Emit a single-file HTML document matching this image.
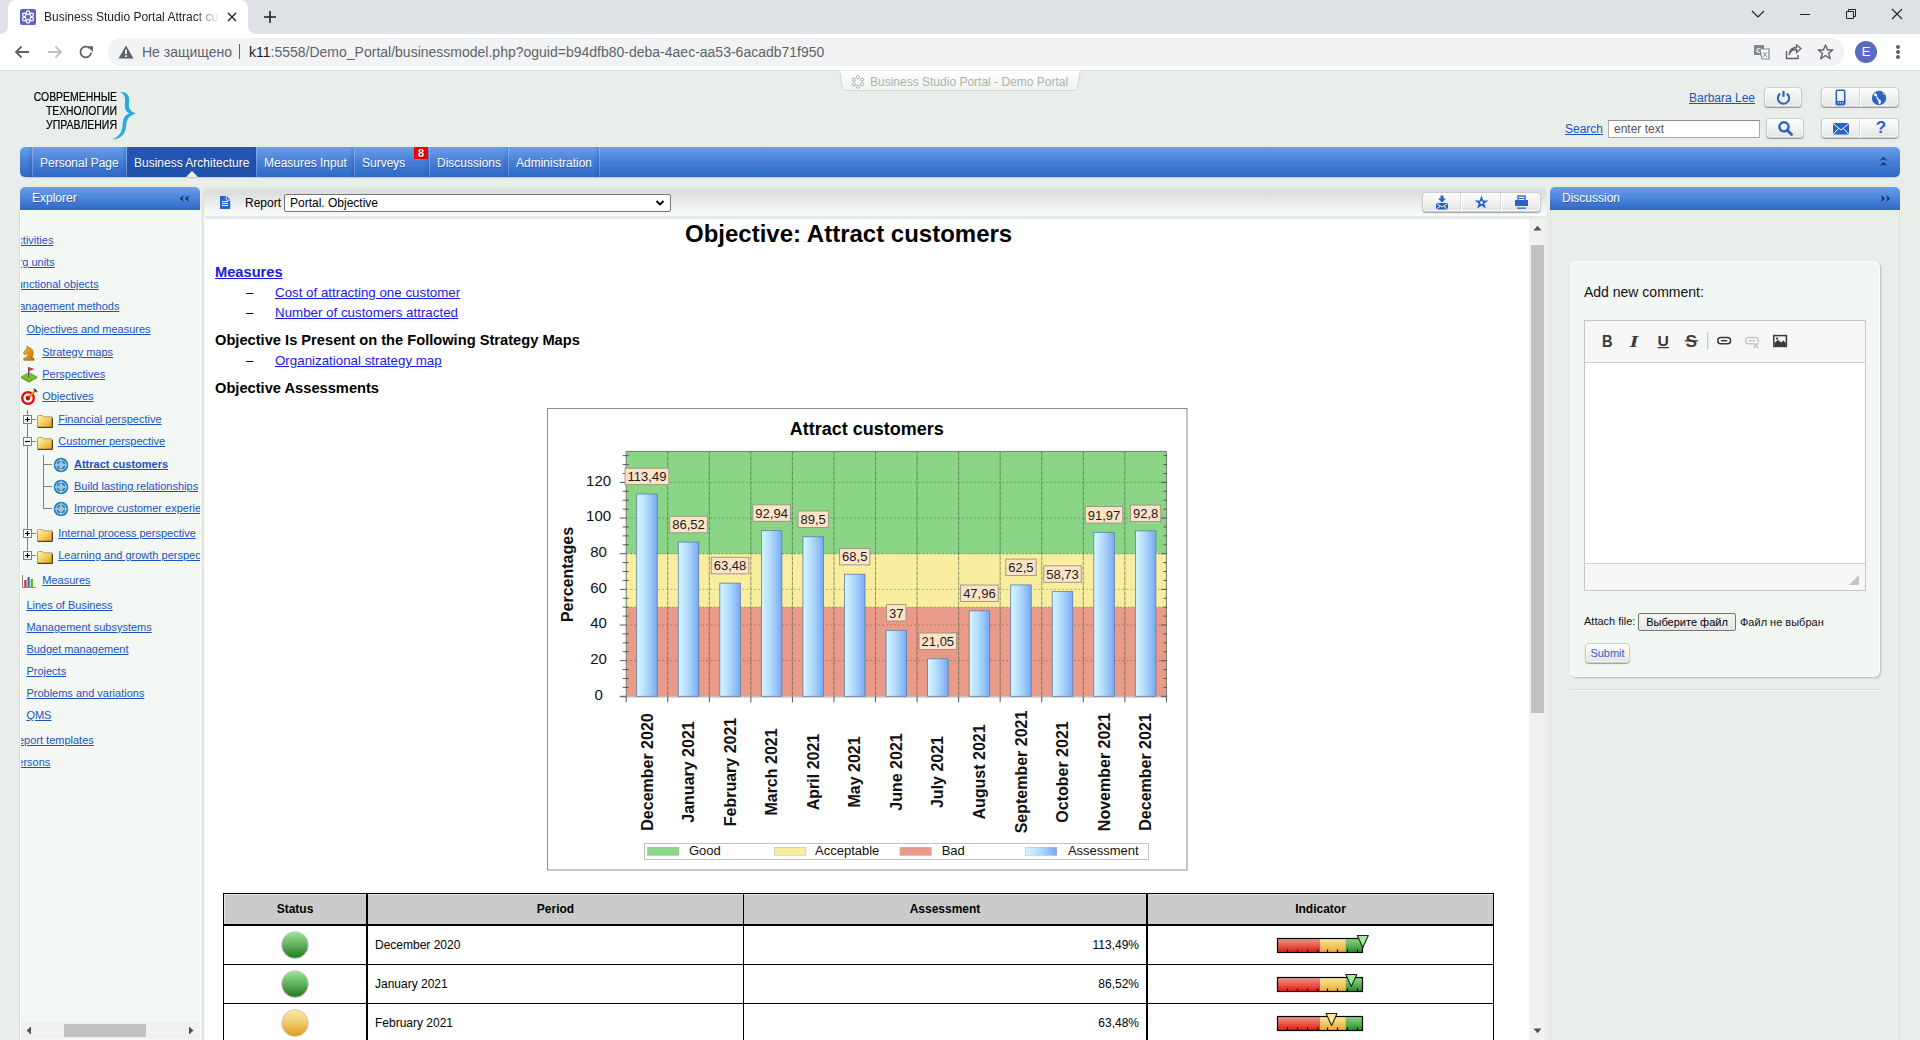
<!DOCTYPE html>
<html><head><meta charset="utf-8">
<style>
*{box-sizing:border-box;margin:0;padding:0}
html,body{width:1920px;height:1040px;overflow:hidden;background:#e9eeea;font-family:"Liberation Sans",sans-serif}
.a{position:absolute}
.nw{white-space:nowrap}
a,.lk{color:#1a53c0;text-decoration:underline}
/* chrome */
#tabs{left:0;top:0;width:1920px;height:34px;background:#dee1e6}
#tab{left:8px;top:0;width:240px;height:34px;background:#fff;border-radius:8px 8px 0 0}
#addr{left:0;top:34px;width:1920px;height:37px;background:#fff;border-bottom:1px solid #dadce0}
#omni{left:108px;top:38px;width:1736px;height:28px;background:#f1f3f4;border-radius:14px}
.ct{font-size:14px;color:#202124}
/* nav */
#nav{left:20px;top:147px;width:1880px;height:30px;border-radius:5px;background:linear-gradient(#6a9fea,#4a82d8 45%,#2d68c5);box-shadow:0 1px 1px rgba(0,0,0,.15)}
.ni{top:148px;height:30px;color:#fff;font-size:12px;line-height:30px;text-shadow:.6px .6px 0 rgba(0,20,80,.35)}
.ns{top:147px;width:6px;height:30px;margin-left:-5px;background:linear-gradient(90deg,rgba(10,40,110,0),rgba(10,40,110,.16) 83%,rgba(255,255,255,.22) 83%)}
.ph{height:23px;border-radius:5px 5px 0 0;background:linear-gradient(#6aa0ea,#2d68c5);color:#fff;font-size:12px;line-height:22px;text-shadow:.6px .6px 0 rgba(0,20,80,.35)}
.sl{font-size:11px;color:#1a53c0;text-decoration:underline;white-space:nowrap}
.cl{font-size:13.33px;color:#1a1ae6;text-decoration:underline;white-space:nowrap}
.btn{border-radius:4px;background:linear-gradient(#fdfdfd,#e3e5e4);box-shadow:0 1px 1px rgba(0,0,0,.35),inset 0 0 0 1px rgba(255,255,255,.6);border:1px solid #c9cdcb}
</style></head><body>
<div class="a" style="left:0;top:0;width:1920px;height:1040px">

<!-- ============ BROWSER CHROME ============ -->
<div id="tabs" class="a"></div>
<div id="tab" class="a"></div>
<svg class="a" style="left:0;top:26px" width="8" height="8"><path d="M0 8 A8 8 0 0 0 8 0 V8Z" fill="#fff"/></svg>
<svg class="a" style="left:248px;top:26px" width="8" height="8"><path d="M8 8 A8 8 0 0 1 0 0 V8Z" fill="#fff"/></svg>
<svg class="a" style="left:20px;top:9px" width="16" height="16" viewBox="0 0 16 16"><rect width="16" height="16" rx="2" fill="#6262c6"/><g fill="#6262c6" stroke="#fff" stroke-width="1.2"><circle cx="8.00" cy="3.70" r="1.75"/><circle cx="11.72" cy="5.85" r="1.75"/><circle cx="11.72" cy="10.15" r="1.75"/><circle cx="8.00" cy="12.30" r="1.75"/><circle cx="4.28" cy="10.15" r="1.75"/><circle cx="4.28" cy="5.85" r="1.75"/></g></svg>
<div class="a nw" style="left:44px;top:9px;width:176px;overflow:hidden;font-size:12px;line-height:16px;color:#202124;-webkit-mask-image:linear-gradient(90deg,#000 150px,transparent 176px)">Business Studio Portal Attract customers</div>
<svg class="a" style="left:226px;top:11px" width="12" height="12" viewBox="0 0 12 12"><path d="M2 2L10 10M10 2L2 10" stroke="#202124" stroke-width="1.4"/></svg>
<svg class="a" style="left:262px;top:9px" width="16" height="16" viewBox="0 0 16 16"><path d="M8 2V14M2 8H14" stroke="#202124" stroke-width="1.6"/></svg>
<svg class="a" style="left:1750px;top:8px" width="16" height="12" viewBox="0 0 16 12"><path d="M2 3L8 9L14 3" fill="none" stroke="#202124" stroke-width="1.2"/></svg>
<div class="a" style="left:1800px;top:14px;width:10px;height:1px;background:#202124"></div>
<svg class="a" style="left:1845px;top:8px" width="12" height="12" viewBox="0 0 12 12"><path d="M1.5 3.5h7v7h-7z M3.5 3.5V1.5h7v7h-2" fill="none" stroke="#202124" stroke-width="1"/></svg>
<svg class="a" style="left:1891px;top:8px" width="12" height="12" viewBox="0 0 12 12"><path d="M1 1L11 11M11 1L1 11" stroke="#202124" stroke-width="1.1"/></svg>
<div id="addr" class="a"></div>
<svg class="a" style="left:13px;top:44px" width="18" height="16" viewBox="0 0 18 16"><path d="M16 8H3M8.5 2.5L3 8L8.5 13.5" fill="none" stroke="#5f6368" stroke-width="1.8"/></svg>
<svg class="a" style="left:46px;top:44px" width="18" height="16" viewBox="0 0 18 16"><path d="M2 8H15M9.5 2.5L15 8L9.5 13.5" fill="none" stroke="#bdc1c6" stroke-width="1.8"/></svg>
<svg class="a" style="left:78px;top:44px" width="16" height="16" viewBox="0 0 16 16"><path d="M13.2 8.6A5.4 5.4 0 1 1 11.8 4.3" fill="none" stroke="#5f6368" stroke-width="1.8"/><path d="M9.2 2.2H15V8Z" fill="#5f6368"/></svg>
<div id="omni" class="a"></div>
<svg class="a" style="left:118px;top:45px" width="16" height="14" viewBox="0 0 16 14"><path d="M8 0.5L15.5 13.5H0.5Z" fill="#5f6368"/><rect x="7.1" y="4.5" width="1.8" height="4.6" fill="#f1f3f4"/><rect x="7.1" y="10.2" width="1.8" height="1.8" fill="#f1f3f4"/></svg>
<div class="a ct nw" style="left:142px;top:44px;line-height:16px;color:#5f6368">Не защищено</div>
<div class="a" style="left:239px;top:44px;width:1px;height:15px;background:#5f6368"></div>
<div class="a ct nw" style="left:249px;top:44px;line-height:16px;color:#5f6368"><span style="color:#202124">k11</span>:5558/Demo_Portal/businessmodel.php?oguid=b94dfb80-deba-4aec-aa53-6acadb71f950</div>
<svg class="a" style="left:1753px;top:44px" width="18" height="16" viewBox="0 0 18 16"><rect x="1" y="1" width="10" height="10" rx="1" fill="#80868b"/><text x="3" y="9" font-size="8" fill="#fff" font-family="Liberation Sans" font-weight="700">G</text><path d="M7 5h9v10H9z" fill="#fff" stroke="#80868b" stroke-width="1.2"/><path d="M10 8l4 5M14 8l-4 5" stroke="#80868b" stroke-width="1"/></svg>
<svg class="a" style="left:1785px;top:44px" width="17" height="16" viewBox="0 0 17 16"><path d="M1.5 7V14.5H13V11" fill="none" stroke="#5f6368" stroke-width="1.4"/><path d="M4 11C5 7 8 5.5 11.5 5.5V8.5L16 4.5L11.5 0.8V3.5C7 3.5 4.5 6.5 4 11Z" fill="none" stroke="#5f6368" stroke-width="1.3"/></svg>
<svg class="a" style="left:1817px;top:44px" width="17" height="16" viewBox="0 0 17 16"><path d="M8.5 1L10.6 6H15.8L11.6 9.2L13.2 14.8L8.5 11.5L3.8 14.8L5.4 9.2L1.2 6H6.4Z" fill="none" stroke="#5f6368" stroke-width="1.4" stroke-linejoin="round"/></svg>
<div class="a" style="left:1855px;top:41px;width:22px;height:22px;border-radius:11px;background:#5c6bc0;color:#fff;font-size:13px;line-height:22px;text-align:center">E</div>
<div class="a" style="left:1896px;top:45px;width:4px;height:4px;border-radius:2px;background:#5f6368"></div>
<div class="a" style="left:1896px;top:50px;width:4px;height:4px;border-radius:2px;background:#5f6368"></div>
<div class="a" style="left:1896px;top:55px;width:4px;height:4px;border-radius:2px;background:#5f6368"></div>

<!-- ============ HEADER ============ -->
<div class="a nw" style="left:7px;top:90px;width:110px;font-size:12px;line-height:14px;color:#000;text-align:right;-webkit-text-stroke:.2px #000">
<div style="transform:scaleX(.87);transform-origin:right">СОВРЕМЕННЫЕ</div>
<div style="transform:scaleX(.865);transform-origin:right">ТЕХНОЛОГИИ</div>
<div style="transform:scaleX(.875);transform-origin:right">УПРАВЛЕНИЯ</div>
</div>
<svg class="a" style="left:0;top:0" width="140" height="142"><path d="M119.5 92C125 91.3 130 93.8 129.2 102C128.7 107 128.3 110.5 135.8 113.5C128.5 116 126.6 119 126.2 126C125.6 133 121 139.8 112.5 139.2C118.5 137 122 133 122.6 125C123.1 118 124.3 115 129.5 113.5C124.4 111.2 124.6 107 125.1 102C125.6 96 123.8 93.5 119.5 92Z" fill="#2aa8e2"/></svg>
<svg class="a" style="left:838px;top:70px" width="244" height="22" viewBox="0 0 244 22"><defs><linearGradient id="tg" x1="0" y1="0" x2="0" y2="1"><stop offset="0" stop-color="#ffffff"/><stop offset="1" stop-color="#f0f3f1"/></linearGradient></defs><path d="M1.5 0.5L4.5 18Q5 20.5 8 20.5H236Q239 20.5 239.5 18L242.5 0.5" fill="url(#tg)" stroke="#d3d9d5" stroke-width="1"/></svg>
<svg class="a" style="left:851px;top:75px" width="14" height="14" viewBox="0 0 14 14"><g fill="none" stroke="#a8b5ac" stroke-width="1"><circle cx="7" cy="2.3" r="1.6"/><circle cx="11.1" cy="4.7" r="1.6"/><circle cx="11.1" cy="9.3" r="1.6"/><circle cx="7" cy="11.7" r="1.6"/><circle cx="2.9" cy="9.3" r="1.6"/><circle cx="2.9" cy="4.7" r="1.6"/></g></svg>
<div class="a nw" style="left:870px;top:75px;font-size:12px;line-height:14px;color:#a7b4ab">Business Studio Portal - Demo Portal</div>

<div class="a nw lk" style="left:1689px;top:91px;font-size:12px;line-height:14px">Barbara Lee</div>
<div class="a btn" style="left:1764px;top:87px;width:38px;height:20px"></div>
<svg class="a" style="left:1776px;top:90px" width="15" height="15" viewBox="0 0 15 15"><path d="M4.2 3.6A5.6 5.6 0 1 0 10.8 3.6" fill="none" stroke="#2c62c6" stroke-width="2"/><rect x="6.4" y="0.8" width="2.2" height="6.2" rx="1" fill="#2c62c6"/></svg>
<div class="a btn" style="left:1821px;top:87px;width:78px;height:20px"></div>
<div class="a" style="left:1860px;top:88px;width:1px;height:19px;background:#fff;box-shadow:-1px 0 0 #d8dcda"></div>
<svg class="a" style="left:1835px;top:89px" width="11" height="17" viewBox="0 0 11 17"><rect x="1.3" y="1.3" width="8.4" height="14.4" rx="1.3" fill="none" stroke="#2c62c6" stroke-width="1.6"/><rect x="1.3" y="12" width="8.4" height="3.7" fill="#2c62c6"/><circle cx="3.4" cy="13.9" r=".6" fill="#fff"/><circle cx="5.5" cy="13.9" r=".6" fill="#fff"/><circle cx="7.6" cy="13.9" r=".6" fill="#fff"/></svg>
<svg class="a" style="left:1871px;top:90px" width="16" height="16" viewBox="0 0 16 16"><circle cx="8" cy="8" r="7.2" fill="#2c62c6"/><path d="M3.2 3.5C4.5 3 5.8 3.8 6 5C6.2 6.5 5 6.8 5.5 8.2C6 9.5 7.5 9.8 7.5 11.5C7.5 13 8 14 8.5 14.5C9.5 13.5 10 12.5 10 11.2C10 10 8.5 9.5 7.5 9C6.8 8.5 7.5 7.5 6.5 7C5.5 6.5 4 7 3.2 5.5Z M11.5 2.6C12 3.5 11.5 4 12.2 4.5C12.8 5 13.5 4.6 13.8 5.2" fill="#fff"/></svg>

<div class="a nw lk" style="left:1565px;top:122px;font-size:12px;line-height:14px">Search</div>
<div class="a" style="left:1608px;top:120px;width:152px;height:18px;background:#fff;border:1px solid #a8aca9;border-top-color:#8d918e"></div>
<div class="a nw" style="left:1614px;top:122px;font-size:12px;line-height:15px;color:#555">enter text</div>
<div class="a btn" style="left:1766px;top:118px;width:38px;height:20px"></div>
<svg class="a" style="left:1777px;top:120px" width="17" height="17" viewBox="0 0 17 17"><circle cx="7" cy="6.8" r="4.6" fill="none" stroke="#2c62c6" stroke-width="2.4"/><path d="M10.3 10.2L14.6 14.5" stroke="#2c62c6" stroke-width="2.8" stroke-linecap="round"/></svg>
<div class="a btn" style="left:1821px;top:118px;width:78px;height:20px"></div>
<div class="a" style="left:1860px;top:119px;width:1px;height:19px;background:#fff;box-shadow:-1px 0 0 #d8dcda"></div>
<svg class="a" style="left:1832px;top:122px" width="18" height="13" viewBox="0 0 18 13"><rect x="1" y="1" width="16" height="11.5" rx="1.5" fill="#2c62c6"/><path d="M1.5 1.8L9 8L16.5 1.8M1.5 12L6.5 6.5M16.5 12L11.5 6.5" fill="none" stroke="#fff" stroke-width="1"/></svg>
<div class="a" style="left:1873px;top:118px;width:16px;height:20px;font-size:17px;font-weight:700;line-height:20px;color:#2c62c6;text-align:center">?</div>

<!-- ============ NAV ============ -->
<div id="nav" class="a"></div>
<div class="a" style="left:127px;top:147px;width:129px;height:30px;background:linear-gradient(#2257b4,#1f52ab)"></div>
<svg class="a" style="left:186px;top:171px" width="12" height="6" viewBox="0 0 12 6"><path d="M0 6L6 0L12 6Z" fill="#e9eeea"/></svg>
<div class="a ns" style="left:32px"></div>
<div class="a ns" style="left:126px"></div>
<div class="a ns" style="left:256px"></div>
<div class="a ns" style="left:354px"></div>
<div class="a ns" style="left:429px"></div>
<div class="a ns" style="left:508px"></div>
<div class="a ns" style="left:599px"></div>
<div class="a ni nw" style="left:40px">Personal Page</div>
<div class="a ni nw" style="left:134px">Business Architecture</div>
<div class="a ni nw" style="left:264px">Measures Input</div>
<div class="a ni nw" style="left:362px">Surveys</div>
<div class="a" style="left:414px;top:147px;width:14px;height:12px;background:#f80000;color:#fff;font-size:11px;font-weight:700;line-height:12px;text-align:center;text-shadow:.6px .6px 0 rgba(0,0,0,.5)">8</div>
<div class="a ni nw" style="left:437px">Discussions</div>
<div class="a ni nw" style="left:516px">Administration</div>
<svg class="a" style="left:1876px;top:154px" width="14" height="14" viewBox="1876 154 14 14"><path d="M1883.4 156.8L1887.2 160.8L1883.4 159.3L1879.8 160.8Z M1883.4 162L1887.2 166L1883.4 164.5L1879.8 166Z" fill="#14284e" opacity=".9"/></svg>

<!-- ============ EXPLORER ============ -->
<div class="a ph" style="left:20px;top:187px;width:180px;padding-left:12px">Explorer</div>
<svg class="a" style="left:176px;top:192px" width="16" height="13" viewBox="176 192 16 13"><path d="M179.6 198.5L184 195L182.4 198.5L184 202Z M184.9 198.5L189.3 195L187.7 198.5L189.3 202Z" fill="#14284e" opacity=".9"/></svg>
<div class="a" style="left:19px;top:210px;width:181px;height:830px;background:#f3f8f4;border-left:1px solid #dce1dd;box-shadow:inset 1px 0 0 #fff"></div>
<div class="a" style="left:200px;top:210px;width:1px;height:830px;background:#fbfdfb"></div>
<div class="a" style="left:21px;top:210px;width:179px;height:812px;overflow:hidden">
 <div class="a sl" style="left:-11.0px;top:23.6px">Activities</div>
 <div class="a sl" style="left:-11.0px;top:45.7px">Org units</div>
 <div class="a sl" style="left:-11.0px;top:68.0px">Functional objects</div>
 <div class="a sl" style="left:-11.0px;top:89.9px">Management methods</div>
 <div class="a sl" style="left:5.5px;top:113.2px">Objectives and measures</div>
 <div class="a sl" style="left:21.2px;top:135.9px">Strategy maps</div>
 <div class="a sl" style="left:21.2px;top:157.8px">Perspectives</div>
 <div class="a sl" style="left:21.2px;top:179.7px">Objectives</div>
 <div class="a sl" style="left:37.2px;top:202.9px">Financial perspective</div>
 <div class="a sl" style="left:37.2px;top:224.9px">Customer perspective</div>
 <div class="a sl" style="left:53.0px;top:248.1px;font-weight:700">Attract customers</div>
 <div class="a sl" style="left:53.0px;top:270.1px">Build lasting relationships</div>
 <div class="a sl" style="left:53.0px;top:292.1px">Improve customer experience</div>
 <div class="a sl" style="left:37.2px;top:317.1px">Internal process perspective</div>
 <div class="a sl" style="left:37.2px;top:339.1px">Learning and growth perspective</div>
 <div class="a sl" style="left:21.3px;top:364.1px">Measures</div>
 <div class="a sl" style="left:5.4px;top:388.6px">Lines of Business</div>
 <div class="a sl" style="left:5.4px;top:410.8px">Management subsystems</div>
 <div class="a sl" style="left:5.4px;top:433.0px">Budget management</div>
 <div class="a sl" style="left:5.4px;top:455.2px">Projects</div>
 <div class="a sl" style="left:5.4px;top:477.0px">Problems and variations</div>
 <div class="a sl" style="left:5.4px;top:499.0px">QMS</div>
 <div class="a sl" style="left:-11.0px;top:524.0px">Report templates</div>
 <div class="a sl" style="left:-11.0px;top:546.1px">Persons</div>
</div>
<div class="a" style="left:27px;top:410px;width:1px;height:146px;background:#808080"></div>
<div class="a" style="left:43px;top:455px;width:1px;height:54px;background:#808080"></div>
<div class="a" style="left:44px;top:464px;width:8px;height:1px;background:#808080"></div>
<div class="a" style="left:44px;top:486px;width:8px;height:1px;background:#808080"></div>
<div class="a" style="left:44px;top:508px;width:8px;height:1px;background:#808080"></div>
<svg class="a" style="left:23px;top:415.0px" width="13" height="9" viewBox="0 0 13 9"><rect x="0.5" y="0.5" width="8" height="8" fill="#fff" stroke="#808080"/><path d="M2 4.5H7M4.5 2V7" stroke="#000" stroke-width="1.2"/><path d="M9 4.5H13" stroke="#808080"/></svg>
<svg class="a" style="left:23px;top:437.0px" width="13" height="9" viewBox="0 0 13 9"><rect x="0.5" y="0.5" width="8" height="8" fill="#fff" stroke="#808080"/><path d="M2 4.5H7" stroke="#000" stroke-width="1.2"/><path d="M9 4.5H13" stroke="#808080"/></svg>
<svg class="a" style="left:23px;top:529.0px" width="13" height="9" viewBox="0 0 13 9"><rect x="0.5" y="0.5" width="8" height="8" fill="#fff" stroke="#808080"/><path d="M2 4.5H7M4.5 2V7" stroke="#000" stroke-width="1.2"/><path d="M9 4.5H13" stroke="#808080"/></svg>
<svg class="a" style="left:23px;top:551.0px" width="13" height="9" viewBox="0 0 13 9"><rect x="0.5" y="0.5" width="8" height="8" fill="#fff" stroke="#808080"/><path d="M2 4.5H7M4.5 2V7" stroke="#000" stroke-width="1.2"/><path d="M9 4.5H13" stroke="#808080"/></svg>
<svg class="a" style="left:37px;top:415px" width="16" height="13" viewBox="0 0 16 13"><defs><linearGradient id="fg415" x1="0" y1="0" x2="1" y2="1"><stop offset="0" stop-color="#fff3b0"/><stop offset=".5" stop-color="#f5cf5e"/><stop offset="1" stop-color="#dc9a1e"/></linearGradient></defs><path d="M0.5 1.5Q0.5 0.5 1.5 0.5H5.5L6.5 1.8H14.5Q15.5 1.8 15.5 2.8V12.5H0.5Z" fill="url(#fg415)" stroke="#9c8a62" stroke-width=".8"/><path d="M0.8 12.3H15.3V3" fill="none" stroke="#3a2a10" stroke-width="1"/></svg>
<svg class="a" style="left:37px;top:437px" width="16" height="13" viewBox="0 0 16 13"><defs><linearGradient id="fg437" x1="0" y1="0" x2="1" y2="1"><stop offset="0" stop-color="#fff3b0"/><stop offset=".5" stop-color="#f5cf5e"/><stop offset="1" stop-color="#dc9a1e"/></linearGradient></defs><path d="M0.5 1.5Q0.5 0.5 1.5 0.5H5.5L6.5 1.8H14.5Q15.5 1.8 15.5 2.8V12.5H0.5Z" fill="url(#fg437)" stroke="#9c8a62" stroke-width=".8"/><path d="M0.8 12.3H15.3V3" fill="none" stroke="#3a2a10" stroke-width="1"/></svg>
<svg class="a" style="left:37px;top:529px" width="16" height="13" viewBox="0 0 16 13"><defs><linearGradient id="fg529" x1="0" y1="0" x2="1" y2="1"><stop offset="0" stop-color="#fff3b0"/><stop offset=".5" stop-color="#f5cf5e"/><stop offset="1" stop-color="#dc9a1e"/></linearGradient></defs><path d="M0.5 1.5Q0.5 0.5 1.5 0.5H5.5L6.5 1.8H14.5Q15.5 1.8 15.5 2.8V12.5H0.5Z" fill="url(#fg529)" stroke="#9c8a62" stroke-width=".8"/><path d="M0.8 12.3H15.3V3" fill="none" stroke="#3a2a10" stroke-width="1"/></svg>
<svg class="a" style="left:37px;top:551px" width="16" height="13" viewBox="0 0 16 13"><defs><linearGradient id="fg551" x1="0" y1="0" x2="1" y2="1"><stop offset="0" stop-color="#fff3b0"/><stop offset=".5" stop-color="#f5cf5e"/><stop offset="1" stop-color="#dc9a1e"/></linearGradient></defs><path d="M0.5 1.5Q0.5 0.5 1.5 0.5H5.5L6.5 1.8H14.5Q15.5 1.8 15.5 2.8V12.5H0.5Z" fill="url(#fg551)" stroke="#9c8a62" stroke-width=".8"/><path d="M0.8 12.3H15.3V3" fill="none" stroke="#3a2a10" stroke-width="1"/></svg>
<svg class="a" style="left:53px;top:456.5px" width="16" height="16" viewBox="0 0 16 16"><circle cx="8" cy="8" r="7.3" fill="#2b7fb8"/><g fill="none" stroke="#cfe4f2" stroke-width=".9"><circle cx="8" cy="8" r="5"/><circle cx="8" cy="8" r="2.3"/><path d="M8 2V14M2 8H14"/></g></svg>
<svg class="a" style="left:53px;top:478.5px" width="16" height="16" viewBox="0 0 16 16"><circle cx="8" cy="8" r="7.3" fill="#2b7fb8"/><g fill="none" stroke="#cfe4f2" stroke-width=".9"><circle cx="8" cy="8" r="5"/><circle cx="8" cy="8" r="2.3"/><path d="M8 2V14M2 8H14"/></g></svg>
<svg class="a" style="left:53px;top:500.5px" width="16" height="16" viewBox="0 0 16 16"><circle cx="8" cy="8" r="7.3" fill="#2b7fb8"/><g fill="none" stroke="#cfe4f2" stroke-width=".9"><circle cx="8" cy="8" r="5"/><circle cx="8" cy="8" r="2.3"/><path d="M8 2V14M2 8H14"/></g></svg>
<svg class="a" style="left:22px;top:345px" width="14" height="16" viewBox="0 0 14 16"><defs><linearGradient id="kn" x1="0" y1="0" x2="1" y2="1"><stop offset="0" stop-color="#ffc040"/><stop offset="1" stop-color="#c06a00"/></linearGradient></defs><path d="M5 0.8L6.5 2.5C9.5 2.8 11.5 5 11 9C10.8 10.5 10 11.5 10 13H12V15.3H1.8V13H4C4 11.5 6.5 10 7 8.5C5.5 9 4 9 2.5 9.8L1.5 8C2.5 6 4 4.5 5 3.2Z" fill="url(#kn)" stroke="#a65800" stroke-width=".6"/></svg>
<svg class="a" style="left:20px;top:366px" width="18" height="17" viewBox="0 0 18 17"><path d="M1 11L9 6.5L17 11L9 15.5Z" fill="#7cc026" stroke="#5a9a10" stroke-width=".7"/><path d="M1 11L9 15.5L17 11V12L9 16.5L1 12Z" fill="#4f8a10"/><path d="M8.6 1V11.5" stroke="#555" stroke-width="1.2"/><path d="M9 1.2L14.5 3L9 5.2Z" fill="#e83030"/></svg>
<svg class="a" style="left:20px;top:388px" width="18" height="18" viewBox="0 0 18 18"><circle cx="8" cy="10" r="7" fill="#e01010"/><circle cx="8" cy="10" r="4.6" fill="#fff"/><circle cx="8" cy="10" r="2.4" fill="#e01010"/><path d="M8 10L15.5 2.5" stroke="#e88a10" stroke-width="2"/><path d="M13.5 1.5L16.5 4.5M14.5 0.5V3.5H17.5" stroke="#666" stroke-width="1"/><path d="M7 11L9.5 8.5" stroke="#333" stroke-width="1.5"/></svg>
<svg class="a" style="left:22px;top:575px" width="14" height="13" viewBox="0 0 14 13"><path d="M0.5 0V12.5H14" fill="none" stroke="#888" stroke-width="1"/><rect x="2.3" y="5" width="2.2" height="7" fill="#e02020"/><rect x="5.5" y="2" width="2.2" height="10" fill="#2a70d0"/><rect x="8.7" y="4" width="2.2" height="8" fill="#50b030"/></svg>
<div class="a" style="left:21px;top:1022px;width:179px;height:17px;background:#f1f1f1"></div>
<div class="a" style="left:64px;top:1024px;width:82px;height:13px;background:#c1c1c1"></div>
<svg class="a" style="left:26px;top:1026px" width="6" height="9" viewBox="0 0 6 9"><path d="M5 0.5V8.5L0.5 4.5Z" fill="#505050"/></svg>
<svg class="a" style="left:188px;top:1026px" width="6" height="9" viewBox="0 0 6 9"><path d="M1 0.5V8.5L5.5 4.5Z" fill="#505050"/></svg>

<!-- ============ MAIN ============ -->
<div class="a" style="left:203px;top:188px;width:1343px;height:852px;background:#fff;border-left:1px solid #dde2de;border-radius:3px 0 0 0;box-shadow:-1px 0 0 #e3e8e4"></div>
<div class="a" style="left:204px;top:187px;width:1342px;height:30px;border-radius:3px 0 0 0;background:linear-gradient(#e2e5e4,#dcdfde 15%,#f4f5f5 75%,#fbfbfb);border-top:1px solid #e3e7e5"></div>
<div class="a" style="left:205px;top:216px;width:1341px;height:3px;background:#e6ebe7"></div>
<svg class="a" style="left:219px;top:195px" width="13" height="16" viewBox="219 195 13 16"><path d="M220 196H226.6L230.2 199.8V209H220Z" fill="#2c62c6"/><path d="M226.2 196.2V199.2Q226.2 200.2 227.2 200.2H230" fill="none" stroke="#fff" stroke-width=".9"/><path d="M221.9 201.5H228M221.9 203.5H228M221.9 205.5H228" stroke="#fff" stroke-width=".9"/></svg>
<div class="a nw" style="left:245px;top:196px;font-size:12px;line-height:14px;color:#000">Report</div>
<div class="a" style="left:284px;top:194px;width:387px;height:18px;background:#fff;border:1px solid #767676;border-radius:2px"></div>
<div class="a nw" style="left:290px;top:196px;font-size:12px;line-height:14px;color:#000">Portal. Objective</div>
<svg class="a" style="left:655px;top:199px" width="10" height="8" viewBox="0 0 10 8"><path d="M1.5 2L5 5.5L8.5 2" fill="none" stroke="#000" stroke-width="1.8"/></svg>
<div class="a btn" style="left:1422px;top:192px;width:119px;height:20px"></div>
<div class="a" style="left:1461px;top:193px;width:1px;height:19px;background:#fff;box-shadow:-1px 0 0 #d8dcda"></div>
<div class="a" style="left:1501px;top:193px;width:1px;height:19px;background:#fff;box-shadow:-1px 0 0 #d8dcda"></div>
<svg class="a" style="left:1435px;top:195px" width="14" height="15" viewBox="0 0 14 15"><path d="M5.5 0.5H8.5V3.5H11L7 7.5L3 3.5H5.5Z" fill="#2c62c6"/><rect x="1" y="8" width="12" height="6.5" rx="1" fill="#2c62c6"/><path d="M1.5 8.5L7 12L12.5 8.5M1.5 14.2L5 11.3M12.5 14.2L9 11.3" fill="none" stroke="#fff" stroke-width=".9"/></svg>
<svg class="a" style="left:1474px;top:195px" width="15" height="15" viewBox="0 0 15 15"><path d="M7.5 0.5L9.3 5.5H14.5L10.3 8.6L11.9 13.8L7.5 10.6L3.1 13.8L4.7 8.6L0.5 5.5H5.7Z" fill="#2c62c6"/><circle cx="7.5" cy="7.6" r="1.4" fill="#fff"/></svg>
<svg class="a" style="left:1514px;top:195px" width="15" height="15" viewBox="0 0 15 15"><rect x="4" y="1" width="7" height="5" fill="none" stroke="#2c62c6" stroke-width="1.4"/><path d="M5 3.5H10" stroke="#2c62c6" stroke-width="1"/><rect x="1" y="5" width="13" height="6" fill="#2c62c6"/><rect x="3" y="12.5" width="9" height="1.3" fill="#2c62c6"/></svg>

<div class="a" style="left:1529px;top:219px;width:17px;height:821px;background:#f1f1f1"></div>
<div class="a" style="left:1531px;top:245px;width:13px;height:468px;background:#c1c1c1"></div>
<svg class="a" style="left:1533px;top:225px" width="9" height="6" viewBox="0 0 9 6"><path d="M0.5 5.5H8.5L4.5 0.8Z" fill="#505050"/></svg>
<svg class="a" style="left:1533px;top:1028px" width="9" height="6" viewBox="0 0 9 6"><path d="M0.5 0.5H8.5L4.5 5.2Z" fill="#505050"/></svg>

<div class="a nw" style="left:685px;top:220px;font-size:24px;line-height:28px;font-weight:700;color:#000">Objective: Attract customers</div>
<div class="a cl" style="left:215px;top:264px;font-size:14.67px;font-weight:700;line-height:17px">Measures</div>
<div class="a nw" style="left:246px;top:285px;font-size:13.33px;line-height:15px">–</div>
<div class="a cl" style="left:275px;top:285px;line-height:15px">Cost of attracting one customer</div>
<div class="a nw" style="left:246px;top:305px;font-size:13.33px;line-height:15px">–</div>
<div class="a cl" style="left:275px;top:305px;line-height:15px">Number of customers attracted</div>
<div class="a nw" style="left:215px;top:332px;font-size:14.67px;font-weight:700;line-height:17px;color:#000">Objective Is Present on the Following Strategy Maps</div>
<div class="a nw" style="left:246px;top:353px;font-size:13.33px;line-height:15px">–</div>
<div class="a cl" style="left:275px;top:353px;line-height:15px">Organizational strategy map</div>
<div class="a nw" style="left:215px;top:380px;font-size:14.67px;font-weight:700;line-height:17px;color:#000">Objective Assessments</div>

<!-- CHART -->
<svg class="a" style="left:547px;top:408px" width="641" height="463" viewBox="0 0 641 463" font-family="Liberation Sans">
<defs><linearGradient id="bar" x1="0" y1="0" x2="1" y2="0"><stop offset="0" stop-color="#d4f7ff"/><stop offset=".45" stop-color="#b2dcfb"/><stop offset="1" stop-color="#78a9f4"/></linearGradient></defs>
<rect x="0.5" y="0.5" width="639.5" height="461.5" fill="#fff" stroke="#8c8c8c"/>
<text x="319.7" y="27" font-size="18" font-weight="700" text-anchor="middle" fill="#000">Attract customers</text>
<rect x="79.2" y="43.4" width="540.1999999999999" height="102.30000000000001" fill="#8bd686"/>
<rect x="79.2" y="145.70000000000002" width="540.1999999999999" height="53.474999999999994" fill="#f9ee9f"/>
<rect x="79.2" y="199.175" width="540.1999999999999" height="89.125" fill="#e99a88"/>
<line x1="79.2" x2="619.4" y1="252.65" y2="252.65" stroke="#3c5a3c" stroke-opacity=".4" stroke-width="1" stroke-dasharray="2 2"/>
<line x1="79.2" x2="619.4" y1="217.00" y2="217.00" stroke="#3c5a3c" stroke-opacity=".4" stroke-width="1" stroke-dasharray="2 2"/>
<line x1="79.2" x2="619.4" y1="181.35" y2="181.35" stroke="#3c5a3c" stroke-opacity=".4" stroke-width="1" stroke-dasharray="2 2"/>
<line x1="79.2" x2="619.4" y1="145.70" y2="145.70" stroke="#3c5a3c" stroke-opacity=".4" stroke-width="1" stroke-dasharray="2 2"/>
<line x1="79.2" x2="619.4" y1="110.05" y2="110.05" stroke="#3c5a3c" stroke-opacity=".4" stroke-width="1" stroke-dasharray="2 2"/>
<line x1="79.2" x2="619.4" y1="74.40" y2="74.40" stroke="#3c5a3c" stroke-opacity=".4" stroke-width="1" stroke-dasharray="2 2"/>
<line x1="79.2" x2="619.4" y1="145.70" y2="145.70" stroke="#6a6a50" stroke-opacity=".5" stroke-width="1" stroke-dasharray="2.2 1.6"/>
<line x1="79.2" x2="619.4" y1="199.18" y2="199.18" stroke="#6a6a50" stroke-opacity=".5" stroke-width="1" stroke-dasharray="2.2 1.6"/>
<line x1="120.75" x2="120.75" y1="43.4" y2="288.3" stroke="#3c5a3c" stroke-opacity=".6" stroke-width="1" stroke-dasharray="4 1"/>
<line x1="162.31" x2="162.31" y1="43.4" y2="288.3" stroke="#3c5a3c" stroke-opacity=".6" stroke-width="1" stroke-dasharray="4 1"/>
<line x1="203.86" x2="203.86" y1="43.4" y2="288.3" stroke="#3c5a3c" stroke-opacity=".6" stroke-width="1" stroke-dasharray="4 1"/>
<line x1="245.42" x2="245.42" y1="43.4" y2="288.3" stroke="#3c5a3c" stroke-opacity=".6" stroke-width="1" stroke-dasharray="4 1"/>
<line x1="286.97" x2="286.97" y1="43.4" y2="288.3" stroke="#3c5a3c" stroke-opacity=".6" stroke-width="1" stroke-dasharray="4 1"/>
<line x1="328.52" x2="328.52" y1="43.4" y2="288.3" stroke="#3c5a3c" stroke-opacity=".6" stroke-width="1" stroke-dasharray="4 1"/>
<line x1="370.08" x2="370.08" y1="43.4" y2="288.3" stroke="#3c5a3c" stroke-opacity=".6" stroke-width="1" stroke-dasharray="4 1"/>
<line x1="411.63" x2="411.63" y1="43.4" y2="288.3" stroke="#3c5a3c" stroke-opacity=".6" stroke-width="1" stroke-dasharray="4 1"/>
<line x1="453.18" x2="453.18" y1="43.4" y2="288.3" stroke="#3c5a3c" stroke-opacity=".6" stroke-width="1" stroke-dasharray="4 1"/>
<line x1="494.74" x2="494.74" y1="43.4" y2="288.3" stroke="#3c5a3c" stroke-opacity=".6" stroke-width="1" stroke-dasharray="4 1"/>
<line x1="536.29" x2="536.29" y1="43.4" y2="288.3" stroke="#3c5a3c" stroke-opacity=".6" stroke-width="1" stroke-dasharray="4 1"/>
<line x1="577.85" x2="577.85" y1="43.4" y2="288.3" stroke="#3c5a3c" stroke-opacity=".6" stroke-width="1" stroke-dasharray="4 1"/>
<path d="M79.2 288.3V43.4H619.4V288.3" fill="none" stroke="#6e7f6e" stroke-width="1"/>
<line x1="73.2" x2="620.4" y1="288.8" y2="288.8" stroke="#b5b5b5" stroke-width="1.2"/>
<line x1="72.7" x2="79.2" y1="288.30" y2="288.30" stroke="#555" stroke-width="1"/>
<line x1="75.7" x2="81.7" y1="279.39" y2="279.39" stroke="#555" stroke-width="1"/>
<line x1="616.4" x2="619.9" y1="279.39" y2="279.39" stroke="#555" stroke-width="1"/>
<line x1="75.7" x2="81.7" y1="270.48" y2="270.48" stroke="#555" stroke-width="1"/>
<line x1="616.4" x2="619.9" y1="270.48" y2="270.48" stroke="#555" stroke-width="1"/>
<line x1="75.7" x2="81.7" y1="261.56" y2="261.56" stroke="#555" stroke-width="1"/>
<line x1="616.4" x2="619.9" y1="261.56" y2="261.56" stroke="#555" stroke-width="1"/>
<line x1="72.7" x2="79.2" y1="252.65" y2="252.65" stroke="#555" stroke-width="1"/>
<line x1="75.7" x2="81.7" y1="243.74" y2="243.74" stroke="#555" stroke-width="1"/>
<line x1="616.4" x2="619.9" y1="243.74" y2="243.74" stroke="#555" stroke-width="1"/>
<line x1="75.7" x2="81.7" y1="234.83" y2="234.83" stroke="#555" stroke-width="1"/>
<line x1="616.4" x2="619.9" y1="234.83" y2="234.83" stroke="#555" stroke-width="1"/>
<line x1="75.7" x2="81.7" y1="225.91" y2="225.91" stroke="#555" stroke-width="1"/>
<line x1="616.4" x2="619.9" y1="225.91" y2="225.91" stroke="#555" stroke-width="1"/>
<line x1="72.7" x2="79.2" y1="217.00" y2="217.00" stroke="#555" stroke-width="1"/>
<line x1="75.7" x2="81.7" y1="208.09" y2="208.09" stroke="#555" stroke-width="1"/>
<line x1="616.4" x2="619.9" y1="208.09" y2="208.09" stroke="#555" stroke-width="1"/>
<line x1="75.7" x2="81.7" y1="199.18" y2="199.18" stroke="#555" stroke-width="1"/>
<line x1="616.4" x2="619.9" y1="199.18" y2="199.18" stroke="#555" stroke-width="1"/>
<line x1="75.7" x2="81.7" y1="190.26" y2="190.26" stroke="#555" stroke-width="1"/>
<line x1="616.4" x2="619.9" y1="190.26" y2="190.26" stroke="#555" stroke-width="1"/>
<line x1="72.7" x2="79.2" y1="181.35" y2="181.35" stroke="#555" stroke-width="1"/>
<line x1="75.7" x2="81.7" y1="172.44" y2="172.44" stroke="#555" stroke-width="1"/>
<line x1="616.4" x2="619.9" y1="172.44" y2="172.44" stroke="#555" stroke-width="1"/>
<line x1="75.7" x2="81.7" y1="163.53" y2="163.53" stroke="#555" stroke-width="1"/>
<line x1="616.4" x2="619.9" y1="163.53" y2="163.53" stroke="#555" stroke-width="1"/>
<line x1="75.7" x2="81.7" y1="154.61" y2="154.61" stroke="#555" stroke-width="1"/>
<line x1="616.4" x2="619.9" y1="154.61" y2="154.61" stroke="#555" stroke-width="1"/>
<line x1="72.7" x2="79.2" y1="145.70" y2="145.70" stroke="#555" stroke-width="1"/>
<line x1="75.7" x2="81.7" y1="136.79" y2="136.79" stroke="#555" stroke-width="1"/>
<line x1="616.4" x2="619.9" y1="136.79" y2="136.79" stroke="#555" stroke-width="1"/>
<line x1="75.7" x2="81.7" y1="127.88" y2="127.88" stroke="#555" stroke-width="1"/>
<line x1="616.4" x2="619.9" y1="127.88" y2="127.88" stroke="#555" stroke-width="1"/>
<line x1="75.7" x2="81.7" y1="118.96" y2="118.96" stroke="#555" stroke-width="1"/>
<line x1="616.4" x2="619.9" y1="118.96" y2="118.96" stroke="#555" stroke-width="1"/>
<line x1="72.7" x2="79.2" y1="110.05" y2="110.05" stroke="#555" stroke-width="1"/>
<line x1="75.7" x2="81.7" y1="101.14" y2="101.14" stroke="#555" stroke-width="1"/>
<line x1="616.4" x2="619.9" y1="101.14" y2="101.14" stroke="#555" stroke-width="1"/>
<line x1="75.7" x2="81.7" y1="92.23" y2="92.23" stroke="#555" stroke-width="1"/>
<line x1="616.4" x2="619.9" y1="92.23" y2="92.23" stroke="#555" stroke-width="1"/>
<line x1="75.7" x2="81.7" y1="83.31" y2="83.31" stroke="#555" stroke-width="1"/>
<line x1="616.4" x2="619.9" y1="83.31" y2="83.31" stroke="#555" stroke-width="1"/>
<line x1="72.7" x2="79.2" y1="74.40" y2="74.40" stroke="#555" stroke-width="1"/>
<line x1="75.7" x2="81.7" y1="65.49" y2="65.49" stroke="#555" stroke-width="1"/>
<line x1="616.4" x2="619.9" y1="65.49" y2="65.49" stroke="#555" stroke-width="1"/>
<line x1="75.7" x2="81.7" y1="56.58" y2="56.58" stroke="#555" stroke-width="1"/>
<line x1="616.4" x2="619.9" y1="56.58" y2="56.58" stroke="#555" stroke-width="1"/>
<line x1="75.7" x2="81.7" y1="47.66" y2="47.66" stroke="#555" stroke-width="1"/>
<line x1="616.4" x2="619.9" y1="47.66" y2="47.66" stroke="#555" stroke-width="1"/>
<line x1="613.9" x2="619.9" y1="288.30" y2="288.30" stroke="#555" stroke-width="1"/>
<line x1="613.9" x2="619.9" y1="252.65" y2="252.65" stroke="#555" stroke-width="1"/>
<line x1="613.9" x2="619.9" y1="217.00" y2="217.00" stroke="#555" stroke-width="1"/>
<line x1="613.9" x2="619.9" y1="181.35" y2="181.35" stroke="#555" stroke-width="1"/>
<line x1="613.9" x2="619.9" y1="145.70" y2="145.70" stroke="#555" stroke-width="1"/>
<line x1="613.9" x2="619.9" y1="110.05" y2="110.05" stroke="#555" stroke-width="1"/>
<line x1="613.9" x2="619.9" y1="74.40" y2="74.40" stroke="#555" stroke-width="1"/>
<line x1="79.20" x2="79.20" y1="288.3" y2="294.3" stroke="#555" stroke-width="1"/>
<line x1="120.75" x2="120.75" y1="288.3" y2="294.3" stroke="#555" stroke-width="1"/>
<line x1="162.31" x2="162.31" y1="288.3" y2="294.3" stroke="#555" stroke-width="1"/>
<line x1="203.86" x2="203.86" y1="288.3" y2="294.3" stroke="#555" stroke-width="1"/>
<line x1="245.42" x2="245.42" y1="288.3" y2="294.3" stroke="#555" stroke-width="1"/>
<line x1="286.97" x2="286.97" y1="288.3" y2="294.3" stroke="#555" stroke-width="1"/>
<line x1="328.52" x2="328.52" y1="288.3" y2="294.3" stroke="#555" stroke-width="1"/>
<line x1="370.08" x2="370.08" y1="288.3" y2="294.3" stroke="#555" stroke-width="1"/>
<line x1="411.63" x2="411.63" y1="288.3" y2="294.3" stroke="#555" stroke-width="1"/>
<line x1="453.18" x2="453.18" y1="288.3" y2="294.3" stroke="#555" stroke-width="1"/>
<line x1="494.74" x2="494.74" y1="288.3" y2="294.3" stroke="#555" stroke-width="1"/>
<line x1="536.29" x2="536.29" y1="288.3" y2="294.3" stroke="#555" stroke-width="1"/>
<line x1="577.85" x2="577.85" y1="288.3" y2="294.3" stroke="#555" stroke-width="1"/>
<line x1="619.40" x2="619.40" y1="288.3" y2="294.3" stroke="#555" stroke-width="1"/>
<text x="51.6" y="291.70" font-size="15" text-anchor="middle" fill="#111">0</text>
<text x="51.6" y="256.05" font-size="15" text-anchor="middle" fill="#111">20</text>
<text x="51.6" y="220.40" font-size="15" text-anchor="middle" fill="#111">40</text>
<text x="51.6" y="184.75" font-size="15" text-anchor="middle" fill="#111">60</text>
<text x="51.6" y="149.10" font-size="15" text-anchor="middle" fill="#111">80</text>
<text x="51.6" y="113.45" font-size="15" text-anchor="middle" fill="#111">100</text>
<text x="51.6" y="77.80" font-size="15" text-anchor="middle" fill="#111">120</text>
<text transform="translate(25.8 166.5) rotate(-90)" font-size="16" font-weight="700" text-anchor="middle" fill="#111">Percentages</text>
<rect x="89.73" y="86.00" width="20.5" height="202.30" fill="url(#bar)" stroke="#5d7ea6" stroke-width=".8"/>
<rect x="131.28" y="134.08" width="20.5" height="154.22" fill="url(#bar)" stroke="#5d7ea6" stroke-width=".8"/>
<rect x="172.83" y="175.15" width="20.5" height="113.15" fill="url(#bar)" stroke="#5d7ea6" stroke-width=".8"/>
<rect x="214.39" y="122.63" width="20.5" height="165.67" fill="url(#bar)" stroke="#5d7ea6" stroke-width=".8"/>
<rect x="255.94" y="128.77" width="20.5" height="159.53" fill="url(#bar)" stroke="#5d7ea6" stroke-width=".8"/>
<rect x="297.50" y="166.20" width="20.5" height="122.10" fill="url(#bar)" stroke="#5d7ea6" stroke-width=".8"/>
<rect x="339.05" y="222.35" width="20.5" height="65.95" fill="url(#bar)" stroke="#5d7ea6" stroke-width=".8"/>
<rect x="380.60" y="250.78" width="20.5" height="37.52" fill="url(#bar)" stroke="#5d7ea6" stroke-width=".8"/>
<rect x="422.16" y="202.81" width="20.5" height="85.49" fill="url(#bar)" stroke="#5d7ea6" stroke-width=".8"/>
<rect x="463.71" y="176.89" width="20.5" height="111.41" fill="url(#bar)" stroke="#5d7ea6" stroke-width=".8"/>
<rect x="505.27" y="183.61" width="20.5" height="104.69" fill="url(#bar)" stroke="#5d7ea6" stroke-width=".8"/>
<rect x="546.82" y="124.36" width="20.5" height="163.94" fill="url(#bar)" stroke="#5d7ea6" stroke-width=".8"/>
<rect x="588.37" y="122.88" width="20.5" height="165.42" fill="url(#bar)" stroke="#5d7ea6" stroke-width=".8"/>
<rect x="78.08" y="60.20" width="43.80" height="16.5" fill="#fde4c8" stroke="#9b907f" stroke-width=".9"/>
<text x="99.98" y="73.20" font-size="13" text-anchor="middle" fill="#1a1a1a">113,49</text>
<rect x="122.76" y="108.28" width="37.53" height="16.5" fill="#fde4c8" stroke="#9b907f" stroke-width=".9"/>
<text x="141.53" y="121.28" font-size="13" text-anchor="middle" fill="#1a1a1a">86,52</text>
<rect x="164.32" y="149.35" width="37.53" height="16.5" fill="#fde4c8" stroke="#9b907f" stroke-width=".9"/>
<text x="183.08" y="162.35" font-size="13" text-anchor="middle" fill="#1a1a1a">63,48</text>
<rect x="205.87" y="96.83" width="37.53" height="16.5" fill="#fde4c8" stroke="#9b907f" stroke-width=".9"/>
<text x="224.64" y="109.83" font-size="13" text-anchor="middle" fill="#1a1a1a">92,94</text>
<rect x="251.04" y="102.97" width="30.30" height="16.5" fill="#fde4c8" stroke="#9b907f" stroke-width=".9"/>
<text x="266.19" y="115.97" font-size="13" text-anchor="middle" fill="#1a1a1a">89,5</text>
<rect x="292.60" y="140.40" width="30.30" height="16.5" fill="#fde4c8" stroke="#9b907f" stroke-width=".9"/>
<text x="307.75" y="153.40" font-size="13" text-anchor="middle" fill="#1a1a1a">68,5</text>
<rect x="339.57" y="196.55" width="19.46" height="16.5" fill="#fde4c8" stroke="#9b907f" stroke-width=".9"/>
<text x="349.30" y="209.55" font-size="13" text-anchor="middle" fill="#1a1a1a">37</text>
<rect x="372.09" y="224.98" width="37.53" height="16.5" fill="#fde4c8" stroke="#9b907f" stroke-width=".9"/>
<text x="390.85" y="237.98" font-size="13" text-anchor="middle" fill="#1a1a1a">21,05</text>
<rect x="413.64" y="177.01" width="37.53" height="16.5" fill="#fde4c8" stroke="#9b907f" stroke-width=".9"/>
<text x="432.41" y="190.01" font-size="13" text-anchor="middle" fill="#1a1a1a">47,96</text>
<rect x="458.81" y="151.09" width="30.30" height="16.5" fill="#fde4c8" stroke="#9b907f" stroke-width=".9"/>
<text x="473.96" y="164.09" font-size="13" text-anchor="middle" fill="#1a1a1a">62,5</text>
<rect x="496.75" y="157.81" width="37.53" height="16.5" fill="#fde4c8" stroke="#9b907f" stroke-width=".9"/>
<text x="515.52" y="170.81" font-size="13" text-anchor="middle" fill="#1a1a1a">58,73</text>
<rect x="538.30" y="98.56" width="37.53" height="16.5" fill="#fde4c8" stroke="#9b907f" stroke-width=".9"/>
<text x="557.07" y="111.56" font-size="13" text-anchor="middle" fill="#1a1a1a">91,97</text>
<rect x="583.47" y="97.08" width="30.30" height="16.5" fill="#fde4c8" stroke="#9b907f" stroke-width=".9"/>
<text x="598.62" y="110.08" font-size="13" text-anchor="middle" fill="#1a1a1a">92,8</text>
<text transform="translate(105.58 364) rotate(-90)" font-size="16" font-weight="700" text-anchor="middle" fill="#111">December 2020</text>
<text transform="translate(147.13 364) rotate(-90)" font-size="16" font-weight="700" text-anchor="middle" fill="#111">January 2021</text>
<text transform="translate(188.68 364) rotate(-90)" font-size="16" font-weight="700" text-anchor="middle" fill="#111">February 2021</text>
<text transform="translate(230.24 364) rotate(-90)" font-size="16" font-weight="700" text-anchor="middle" fill="#111">March 2021</text>
<text transform="translate(271.79 364) rotate(-90)" font-size="16" font-weight="700" text-anchor="middle" fill="#111">April 2021</text>
<text transform="translate(313.35 364) rotate(-90)" font-size="16" font-weight="700" text-anchor="middle" fill="#111">May 2021</text>
<text transform="translate(354.90 364) rotate(-90)" font-size="16" font-weight="700" text-anchor="middle" fill="#111">June 2021</text>
<text transform="translate(396.45 364) rotate(-90)" font-size="16" font-weight="700" text-anchor="middle" fill="#111">July 2021</text>
<text transform="translate(438.01 364) rotate(-90)" font-size="16" font-weight="700" text-anchor="middle" fill="#111">August 2021</text>
<text transform="translate(479.56 364) rotate(-90)" font-size="16" font-weight="700" text-anchor="middle" fill="#111">September 2021</text>
<text transform="translate(521.12 364) rotate(-90)" font-size="16" font-weight="700" text-anchor="middle" fill="#111">October 2021</text>
<text transform="translate(562.67 364) rotate(-90)" font-size="16" font-weight="700" text-anchor="middle" fill="#111">November 2021</text>
<text transform="translate(604.22 364) rotate(-90)" font-size="16" font-weight="700" text-anchor="middle" fill="#111">December 2021</text>
<rect x="97.5" y="435.5" width="504" height="16" fill="#fff" stroke="#c3c3c3"/>
<rect x="100.5" y="439.2" width="31.5" height="8.2" fill="#8bd686" stroke="#aaa" stroke-width=".4"/>
<text x="142" y="446.6" font-size="13" fill="#111">Good</text>
<rect x="227.4" y="439.2" width="31.5" height="8.2" fill="#f9ee9f" stroke="#aaa" stroke-width=".4"/>
<text x="268" y="446.6" font-size="13" fill="#111">Acceptable</text>
<rect x="352.9" y="439.2" width="31.5" height="8.2" fill="#e99a88" stroke="#aaa" stroke-width=".4"/>
<text x="394.7" y="446.6" font-size="13" fill="#111">Bad</text>
<rect x="478.4" y="439.2" width="31.5" height="8.2" fill="url(#bar)" stroke="#aaa" stroke-width=".4"/>
<text x="520.9" y="446.6" font-size="13" fill="#111">Assessment</text>
</svg>

<!-- TABLE -->
<div class="a" style="left:223px;top:893px;width:1271px;height:147px;background:#fff"></div>
<div class="a" style="left:224px;top:894px;width:1269px;height:30px;background:#cbcbcb;box-shadow:inset 1px 1px 0 #e4e4e4"></div>
<div class="a" style="left:223px;top:893px;width:1271px;height:1px;background:#000"></div>
<div class="a" style="left:223px;top:924px;width:1271px;height:2px;background:#000"></div>
<div class="a" style="left:223px;top:964px;width:1271px;height:1px;background:#000"></div>
<div class="a" style="left:223px;top:1003px;width:1271px;height:1px;background:#000"></div>
<div class="a" style="left:223px;top:893px;width:1px;height:147px;background:#000"></div>
<div class="a" style="left:366px;top:893px;width:2px;height:147px;background:#000"></div>
<div class="a" style="left:743px;top:893px;width:1px;height:147px;background:#000"></div>
<div class="a" style="left:1146px;top:893px;width:2px;height:147px;background:#000"></div>
<div class="a" style="left:1493px;top:893px;width:1px;height:147px;background:#000"></div>
<div class="a nw" style="left:224px;top:902px;width:142px;font-size:12px;line-height:14px;font-weight:700;text-align:center;color:#000">Status</div>
<div class="a nw" style="left:368px;top:902px;width:375px;font-size:12px;line-height:14px;font-weight:700;text-align:center;color:#000">Period</div>
<div class="a nw" style="left:744px;top:902px;width:402px;font-size:12px;line-height:14px;font-weight:700;text-align:center;color:#000">Assessment</div>
<div class="a nw" style="left:1148px;top:902px;width:345px;font-size:12px;line-height:14px;font-weight:700;text-align:center;color:#000">Indicator</div>
<svg width="0" height="0" style="position:absolute"><defs><linearGradient id="sg" x1="0" y1="0" x2="0" y2="1"><stop offset="0" stop-color="#9de993"/><stop offset=".5" stop-color="#62b05e"/><stop offset="1" stop-color="#1d781d"/></linearGradient><linearGradient id="sy" x1="0" y1="0" x2="0" y2="1"><stop offset="0" stop-color="#faeba6"/><stop offset=".5" stop-color="#f0c96a"/><stop offset="1" stop-color="#df9a18"/></linearGradient><linearGradient id="ir" x1="0" y1="0" x2="0" y2="1"><stop offset="0" stop-color="#ee9a8a"/><stop offset="1" stop-color="#e01a10"/></linearGradient><linearGradient id="iy" x1="0" y1="0" x2="0" y2="1"><stop offset="0" stop-color="#faea9a"/><stop offset="1" stop-color="#e8a830"/></linearGradient><linearGradient id="ig" x1="0" y1="0" x2="0" y2="1"><stop offset="0" stop-color="#8ed88a"/><stop offset="1" stop-color="#2a8a2a"/></linearGradient></defs></svg>
<svg class="a" style="left:281px;top:931px" width="28" height="28" viewBox="0 0 28 28"><circle cx="14" cy="14" r="13.3" fill="url(#sg)" stroke="#c8bcc8" stroke-width=".8"/></svg>
<div class="a nw" style="left:375px;top:938px;font-size:12px;line-height:14px;color:#000">December 2020</div>
<div class="a nw" style="left:944px;top:938px;width:195px;font-size:12px;line-height:14px;color:#000;text-align:right">113,49%</div>
<svg class="a" style="left:1270px;top:934px" width="110" height="22" viewBox="0 0 110 22"><rect x="7.5" y="4.5" width="43" height="14" fill="url(#ir)"/><rect x="50.5" y="4.5" width="25" height="14" fill="url(#iy)"/><rect x="75.5" y="4.5" width="17" height="14" fill="url(#ig)"/><rect x="7.5" y="4.5" width="85" height="14" fill="none" stroke="#000" stroke-width="1.2"/><path d="M17.5 15.5V18.5" stroke="#000" stroke-width="1.2"/><path d="M27.5 15.5V18.5" stroke="#000" stroke-width="1.2"/><path d="M37.5 15.5V18.5" stroke="#000" stroke-width="1.2"/><path d="M47.5 15.5V18.5" stroke="#000" stroke-width="1.2"/><path d="M57.5 15.5V18.5" stroke="#000" stroke-width="1.2"/><path d="M67.5 15.5V18.5" stroke="#000" stroke-width="1.2"/><path d="M77.5 15.5V18.5" stroke="#000" stroke-width="1.2"/><path d="M87.5 15.5V18.5" stroke="#000" stroke-width="1.2"/><path d="M87.3 1.5H98.3L92.8 13.5Z" fill="#a0ec98" stroke="#222" stroke-width="1.1" stroke-linejoin="round"/></svg>
<svg class="a" style="left:281px;top:970px" width="28" height="28" viewBox="0 0 28 28"><circle cx="14" cy="14" r="13.3" fill="url(#sg)" stroke="#c8bcc8" stroke-width=".8"/></svg>
<div class="a nw" style="left:375px;top:977px;font-size:12px;line-height:14px;color:#000">January 2021</div>
<div class="a nw" style="left:944px;top:977px;width:195px;font-size:12px;line-height:14px;color:#000;text-align:right">86,52%</div>
<svg class="a" style="left:1270px;top:973px" width="110" height="22" viewBox="0 0 110 22"><rect x="7.5" y="4.5" width="43" height="14" fill="url(#ir)"/><rect x="50.5" y="4.5" width="25" height="14" fill="url(#iy)"/><rect x="75.5" y="4.5" width="17" height="14" fill="url(#ig)"/><rect x="7.5" y="4.5" width="85" height="14" fill="none" stroke="#000" stroke-width="1.2"/><path d="M17.5 15.5V18.5" stroke="#000" stroke-width="1.2"/><path d="M27.5 15.5V18.5" stroke="#000" stroke-width="1.2"/><path d="M37.5 15.5V18.5" stroke="#000" stroke-width="1.2"/><path d="M47.5 15.5V18.5" stroke="#000" stroke-width="1.2"/><path d="M57.5 15.5V18.5" stroke="#000" stroke-width="1.2"/><path d="M67.5 15.5V18.5" stroke="#000" stroke-width="1.2"/><path d="M77.5 15.5V18.5" stroke="#000" stroke-width="1.2"/><path d="M87.5 15.5V18.5" stroke="#000" stroke-width="1.2"/><path d="M75.8 1.5H86.8L81.3 13.5Z" fill="#a0ec98" stroke="#222" stroke-width="1.1" stroke-linejoin="round"/></svg>
<svg class="a" style="left:281px;top:1009px" width="28" height="28" viewBox="0 0 28 28"><circle cx="14" cy="14" r="13.3" fill="url(#sy)" stroke="#c8bcc8" stroke-width=".8"/></svg>
<div class="a nw" style="left:375px;top:1016px;font-size:12px;line-height:14px;color:#000">February 2021</div>
<div class="a nw" style="left:944px;top:1016px;width:195px;font-size:12px;line-height:14px;color:#000;text-align:right">63,48%</div>
<svg class="a" style="left:1270px;top:1012px" width="110" height="22" viewBox="0 0 110 22"><rect x="7.5" y="4.5" width="43" height="14" fill="url(#ir)"/><rect x="50.5" y="4.5" width="25" height="14" fill="url(#iy)"/><rect x="75.5" y="4.5" width="17" height="14" fill="url(#ig)"/><rect x="7.5" y="4.5" width="85" height="14" fill="none" stroke="#000" stroke-width="1.2"/><path d="M17.5 15.5V18.5" stroke="#000" stroke-width="1.2"/><path d="M27.5 15.5V18.5" stroke="#000" stroke-width="1.2"/><path d="M37.5 15.5V18.5" stroke="#000" stroke-width="1.2"/><path d="M47.5 15.5V18.5" stroke="#000" stroke-width="1.2"/><path d="M57.5 15.5V18.5" stroke="#000" stroke-width="1.2"/><path d="M67.5 15.5V18.5" stroke="#000" stroke-width="1.2"/><path d="M77.5 15.5V18.5" stroke="#000" stroke-width="1.2"/><path d="M87.5 15.5V18.5" stroke="#000" stroke-width="1.2"/><path d="M56.1 1.5H67.1L61.6 13.5Z" fill="#faeb9c" stroke="#222" stroke-width="1.1" stroke-linejoin="round"/></svg>

<!-- ============ DISCUSSION ============ -->
<div class="a" style="left:1550px;top:210px;width:350px;height:830px;background:#e9eeea;border-left:1px solid #dcdfdd;border-right:1px solid #dcdfdd"></div>
<div class="a ph" style="left:1550px;top:187px;width:350px;padding-left:12px">Discussion</div>
<svg class="a" style="left:1876px;top:192px" width="16" height="13" viewBox="1876 192 16 13"><path d="M1885 198.5L1880.8 195L1882.3 198.5L1880.8 202Z M1890.2 198.5L1886 195L1887.5 198.5L1886 202Z" fill="#14284e" opacity=".9"/></svg>
<div class="a" style="left:1571px;top:262px;width:308px;height:414px;background:#f3f7f4;border-radius:5px;box-shadow:0 0 0 1px #fff,1px 1px 2px 1px rgba(0,0,0,.22)"></div>
<div class="a nw" style="left:1584px;top:284px;font-size:14px;line-height:16px;color:#111">Add new comment:</div>
<div class="a" style="left:1584px;top:320px;width:282px;height:271px;background:#fff;border:1px solid #c6c6c6"></div>
<div class="a" style="left:1585px;top:321px;width:280px;height:42px;background:#f7f7f7;border-bottom:1px solid #cfcfcf"></div>
<div class="a" style="left:1585px;top:563px;width:280px;height:27px;background:#f7f7f7;border-top:1px solid #cfcfcf"></div>
<svg class="a" style="left:1848px;top:574px" width="12" height="12" viewBox="0 0 12 12"><path d="M11 1V11H1Z" fill="#c4c4c4"/></svg>
<svg class="a" style="left:1595px;top:328px" width="200" height="25" viewBox="1595 328 200 25">
<text x="1602" y="347" font-family="Liberation Sans" font-weight="700" font-size="16.5" fill="#3a3a3a" textLength="10.6" lengthAdjust="spacingAndGlyphs">B</text>
<text x="1629.5" y="347" font-family="Liberation Serif" font-weight="700" font-style="italic" font-size="16.5" fill="#3a3a3a" textLength="9" lengthAdjust="spacingAndGlyphs">I</text>
<text x="1657.6" y="346" font-family="Liberation Sans" font-weight="700" font-size="15.5" fill="#3a3a3a" textLength="11.4" lengthAdjust="spacingAndGlyphs">U</text>
<rect x="1657.8" y="347" width="11.2" height="1.2" fill="#3a3a3a"/>
<text x="1685.5" y="347" font-family="Liberation Sans" font-weight="700" font-size="16" fill="#3a3a3a" textLength="11.5" lengthAdjust="spacingAndGlyphs">S</text>
<rect x="1684.8" y="340.2" width="13.2" height="1.3" fill="#3a3a3a"/>
<rect x="1707.2" y="332" width="1" height="17.5" fill="#bdbdbd"/>
<rect x="1717.8" y="337.6" width="12.8" height="6.2" rx="3.1" fill="none" stroke="#3a3a3a" stroke-width="1.5"/>
<path d="M1721 340.7H1727.3" stroke="#3a3a3a" stroke-width="1.5"/>
<rect x="1745.6" y="337.6" width="12.8" height="6.2" rx="3.1" fill="none" stroke="#c8c8c8" stroke-width="1.5"/>
<path d="M1748.8 340.7H1755" stroke="#c8c8c8" stroke-width="1.5"/>
<path d="M1753.5 343L1758.5 348M1758.5 343L1753.5 348" stroke="#c8c8c8" stroke-width="1.4"/>
<rect x="1753" y="342.3" width="6.5" height="1.2" fill="#f7f7f7"/>
<path d="M1753.5 343.6L1758 348M1758 343.6L1753.5 348" stroke="#c8c8c8" stroke-width="1.4"/>
<rect x="1773.8" y="335.6" width="12.6" height="10.8" fill="none" stroke="#3a3a3a" stroke-width="1.5"/>
<circle cx="1777" cy="338.6" r="1.1" fill="#3a3a3a"/>
<path d="M1774.5 346V343L1778 339.8L1781 342.5L1783.3 340.6L1785.8 343V346Z" fill="#3a3a3a"/>
</svg>
<div class="a nw" style="left:1584px;top:615px;font-size:11px;line-height:13px;color:#111">Attach file:</div>
<div class="a nw" style="left:1638px;top:613px;width:98px;height:18px;background:linear-gradient(#f4f4f4,#e6e6e6);border:1px solid #767676;border-radius:2px;font-size:11px;line-height:16px;text-align:center;color:#000">Выберите файл</div>
<div class="a nw" style="left:1740px;top:616px;font-size:11px;line-height:13px;color:#111">Файл не выбран</div>
<div class="a btn nw" style="left:1585px;top:643px;width:45px;height:20px;font-size:11px;line-height:19px;text-align:center;color:#2c62c6">Submit</div>
<div class="a" style="left:1571px;top:689px;width:308px;height:1px;background:#d6dcd8;box-shadow:0 1px 0 #f6f8f7"></div>

</div>
</body></html>
